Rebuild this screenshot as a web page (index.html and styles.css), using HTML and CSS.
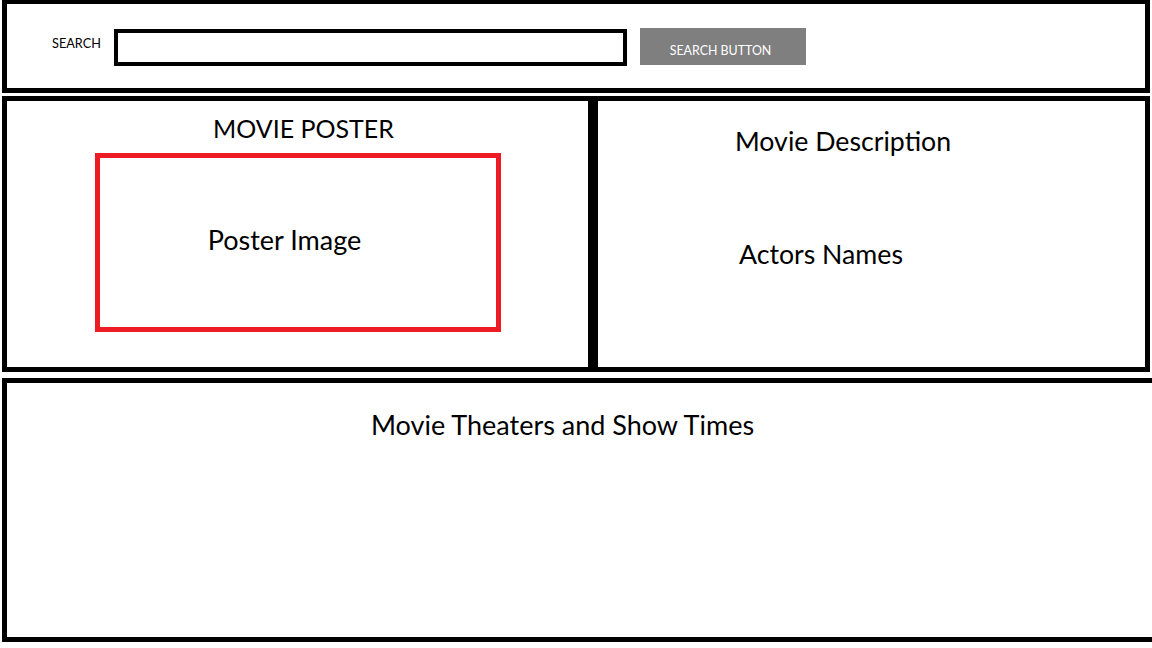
FILE: index.html
```html
<!DOCTYPE html>
<html lang="en">
<head>
<meta charset="utf-8">
<title>Movie Search</title>
<link rel="stylesheet" href="styles.css">
</head>
<body>
<div class="page">
  <header class="searchbar">
    <span class="search-label">SEARCH</span>
    <div class="search-input"></div>
    <div class="search-button">SEARCH BUTTON</div>
  </header>
  <section class="details">
    <div class="poster-panel">
      <h2 class="panel-title">MOVIE POSTER</h2>
      <div class="poster-image"><span>Poster Image</span></div>
    </div>
    <div class="info-panel">
      <p class="info-desc">Movie Description</p>
      <p class="info-actors">Actors Names</p>
    </div>
  </section>
  <section class="showtimes">
    <h2 class="showtimes-title">Movie Theaters and Show Times</h2>
  </section>
</div>
</body>
</html>
```

FILE: styles.css
```css
* { box-sizing: border-box; }

html, body {
  margin: 0;
  padding: 0;
  width: 1152px;
  height: 648px;
  overflow: hidden;
  background: #ffffff;
}

.page {
  display: flex;
  flex-direction: column;
  padding-left: 2px;
  font-family: Lato, "Open Sans", sans-serif;
  color: #000000;
}

/* ---------- search bar ---------- */
.searchbar {
  width: 1148px;
  height: 93px;
  border: 5px solid #000;
  border-top-width: 4px;
  display: flex;
  align-items: center;
  padding-left: 45px;
}

.search-label {
  flex: 0 0 63px;
  font-size: 12.7px;
  line-height: 16px;
  margin-top: -6px;
}

.search-input {
  flex: 0 0 513px;
  height: 37px;
  border: 4px solid #000;
  margin-left: -1px;
  margin-right: 13px;
  margin-top: 2px;
}

.search-button {
  flex: 0 0 166px;
  height: 37px;
  background: #7f7f7f;
  color: #ffffff;
  font-size: 12.4px;
  line-height: 16px;
  display: flex;
  align-items: center;
  justify-content: center;
  padding: 9px 5px 0 0;
  margin-top: 1px;
}

/* ---------- details row ---------- */
.details {
  display: flex;
  height: 276px;
  margin-top: 3px;
}

.poster-panel {
  flex: 0 0 591px;
  border: 5px solid #000;
}

.panel-title {
  margin: 11px 0 0 0;
  padding-left: 12px;
  text-align: center;
  font-size: 25px;
  font-weight: 400;
  line-height: 32px;
}

.poster-image {
  width: 406px;
  height: 179px;
  margin: 9px 0 0 88px;
  border: 5px solid #ed1c24;
  display: flex;
  align-items: center;
  justify-content: center;
  padding: 0 27px 5px 0;
  font-size: 27px;
  line-height: 32px;
}

.info-panel {
  flex: 0 0 557px;
  border: 5px solid #000;
  padding-left: 137px;
}

.info-desc,
.info-actors {
  margin: 0;
  font-size: 26.7px;
  line-height: 32px;
}

.info-desc { margin-top: 24px; }

.info-actors {
  margin-top: 81px;
  margin-left: 4px;
}

/* ---------- showtimes ---------- */
.showtimes {
  width: 1160px;
  height: 264px;
  margin-top: 6px;
  border: 5px solid #000;
  border-right: none;
}

.showtimes-title {
  margin: 26px 0 0 0;
  padding-right: 44px;
  text-align: center;
  font-size: 27px;
  font-weight: 400;
  line-height: 32px;
}
```
